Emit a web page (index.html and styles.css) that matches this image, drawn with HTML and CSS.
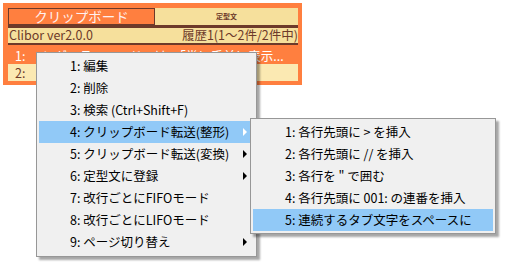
FILE: index.html
```html
<!DOCTYPE html>
<html lang="ja">
<head>
  <meta charset="UTF-8" />
  <title>Clibor</title>
  <link rel="stylesheet" href="styles.css">
</head>
<body>
  <div class="clibor">
    <div class="tabs">
      <div class="tab tab-active">クリップボード</div>
      <div class="tab tab-fixed">定型文</div>
    </div>
    <div class="bar"></div>
    <div class="info">
      <span>Clibor ver2.0.0</span>
      <span>履歴1(1～2件/2件中)</span>
    </div>
    <div class="row row-sel">
      <span class="num">1:</span>
      <span class="clip">レギュラーモードでは、「常に手前に表示...</span>
    </div>
    <div class="row row-alt">
      <span class="num">2:</span>
      <span class="clip"></span>
    </div>
  </div>

  <!-- context menu -->
  <ul class="menu menu-main">
    <li class="item">1: 編集</li>
    <li class="item">2: 削除</li>
    <li class="item">3: 検索 (Ctrl+Shift+F)</li>
    <li class="item item-hot has-sub">4: クリップボード転送(整形)</li>
    <li class="item has-sub">5: クリップボード転送(変換)</li>
    <li class="item has-sub">6: 定型文に登録</li>
    <li class="item">7: 改行ごとにFIFOモード</li>
    <li class="item">8: 改行ごとにLIFOモード</li>
    <li class="item has-sub">9: ページ切り替え</li>
  </ul>

  <ul class="menu menu-sub">
    <li class="item">1: 各行先頭に &gt; を挿入</li>
    <li class="item">2: 各行先頭に // を挿入</li>
    <li class="item">3: 各行を " で囲む</li>
    <li class="item">4: 各行先頭に 001: の連番を挿入</li>
    <li class="item item-hot">5: 連続するタブ文字をスペースに</li>
  </ul>
</body>
</html>
```

FILE: styles.css
```css
:root {
  --orange: #ff7f3f;
  --cream: #f6e09c;
  --cream-light: #fbe9b2;
  --brown: #6d3a2a;
  --menu-bg: #f0f0f0;
  --menu-hot: #91c9f7;
}

* {
  margin: 0;
  padding: 0;
  box-sizing: border-box;
}

body {
  font-family: "Noto Sans CJK JP", "Noto Sans", sans-serif;
  font-size: 12.5px;
  background: #fff;
  width: 508px;
  height: 271px;
  overflow: hidden;
  position: relative;
}

.clibor {
  margin: 3px;
  width: 299px;
  height: 82px;
  background: var(--orange);
  padding: 5px 4px 0 5px;
}

.tabs {
  display: flex;
  height: 17px;
}

.tab {
  display: flex;
  align-items: center;
  justify-content: center;
  line-height: 1;
}

.tab-active {
  width: 147px;
  background: var(--orange);
  border: 1px solid var(--brown);
  color: #fff0f0;
  font-size: 13.5px;
}

.tab-fixed {
  flex: 1;
  background: var(--cream);
  color: var(--brown);
  font-size: 7px;
  font-weight: bold;
}

.bar {
  height: 3px;
  background: var(--brown);
}

.info {
  display: flex;
  justify-content: space-between;
  align-items: center;
  height: 17px;
  background: var(--cream);
  border-bottom: 2px solid var(--brown);
  color: var(--brown);
  padding: 0 0 0 1px;
  line-height: 1;
}

.row {
  display: flex;
  align-items: center;
  height: 18px;
  line-height: 1.2;
  white-space: nowrap;
}

.row-sel {
  color: #fff;
  margin-top: 1px;
}

.row-alt {
  background: var(--cream-light);
  color: var(--brown);
  height: 17px;
}

.num {
  width: 34px;
  padding-left: 7px;
}

/* menus */
.menu {
  position: absolute;
  list-style: none;
  background: var(--menu-bg);
  border: 1px solid #979797;
  padding: 2px;
  box-shadow: 3px 3px 2px rgba(0, 0, 0, 0.35);
  color: #000;
}

.menu-main {
  left: 36px;
  top: 52px;
  width: 221px;
  height: 205px;
}

.menu-sub {
  left: 250px;
  top: 118px;
  width: 246px;
  height: 116px;
}

.item {
  position: relative;
  height: 22px;
  line-height: 22px;
  padding-left: 31px;
  white-space: nowrap;
}

.menu-sub .item {
  padding-left: 32px;
}

.item-hot {
  background: var(--menu-hot);
}

.has-sub::after {
  content: "";
  position: absolute;
  right: 7px;
  top: 7px;
  border-left: 4px solid #000;
  border-top: 4px solid transparent;
  border-bottom: 4px solid transparent;
}

.item-hot.has-sub::after {
  border-left-color: #fff;
}
```
